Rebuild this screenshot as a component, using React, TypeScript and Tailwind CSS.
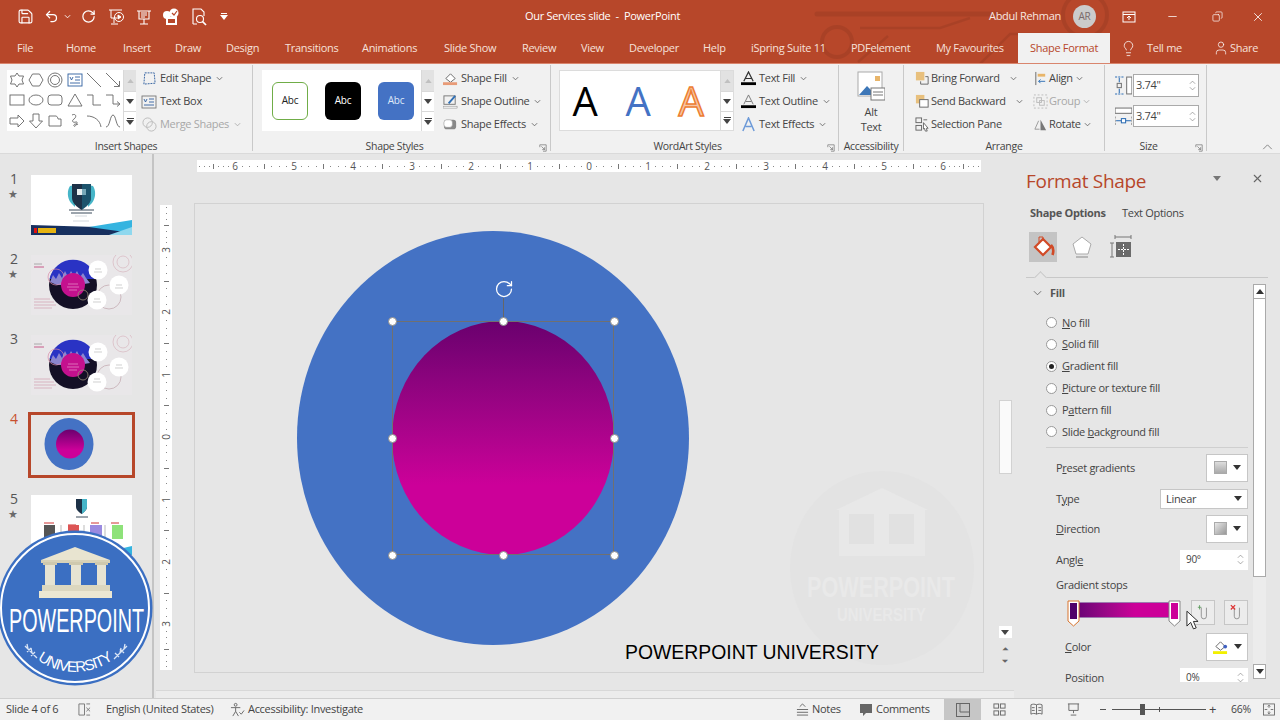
import React from "react";
import { Save, Undo2, RotateCw, Minus, X, Lightbulb, User, Copy } from "lucide-react";

const Chev = ({ c = "#666" }: { c?: string }) => (
  <svg viewBox="0 0 8 5" className="w-[7px] h-[5px] shrink-0" fill="none" stroke={c} strokeWidth="1"><path d="M1 1l3 3 3-3" /></svg>
);
const Tri = ({ c = "#333" }: { c?: string }) => (
  <svg viewBox="0 0 8 5" className="w-[8px] h-[5px] shrink-0"><path d="M0 0h8L4 5z" fill={c} /></svg>
);
const G = ({ children }: { children: React.ReactNode }) => (
  <svg viewBox="0 0 16 16" className="w-[16px] h-[16px]" fill="none" stroke="#666" strokeWidth="0.9">{children}</svg>
);

const shapes: React.ReactNode[] = [
  <polygon points="8,1 10,4 14.5,4 13,8 14.5,12 10,12 8,15 6,12 1.5,12 3,8 1.5,4 6,4" />,
  <polygon points="4.5,2 11.5,2 15,8 11.5,14 4.5,14 1,8" />,
  <><circle cx="8" cy="8" r="7" /><circle cx="8" cy="8" r="4.5" /></>,
  <><rect x="1" y="2" width="14" height="12" stroke="#2f5f9f" /><path d="M3 5l1.5 3L6 5M8 5h5M8 8h5M3 11h10" stroke="#2f5f9f" /></>,
  <path d="M1 1l14 14" />,
  <><path d="M1 1l13 13" /><path d="M14.5 9v5.500H9" /></>,
  <rect x="1" y="3" width="14" height="10" />,
  <ellipse cx="8" cy="8" rx="7" ry="5" />,
  <rect x="1" y="3" width="14" height="10" rx="3" />,
  <polygon points="8,2 15,14 1,14" />,
  <path d="M1 3h6v10h8" />,
  <><path d="M1 3h7v9h6" /><path d="M12 9.500l3 2.500-3 2.500" /></>,
  <polygon points="1,5 9,5 9,2 15,8 9,14 9,11 1,11" />,
  <polygon points="5,1 11,1 11,8 14.500,8 8,15 1.500,8 5,8" />,
  <path d="M2 3h7c1 0 2 2 2 3h3v7H2z" />,
  <path d="M5 2c4-2 5 2 2 4s-1 4 2 3-1 6-2 4 3-3 4-1" />,
  <path d="M1 3c7 0 13 4 14 11" />,
  <path d="M1 14C5 14 5 2 8 2s3 12 7 12" />,
];

const RB = ({ icon, label, chev = true, grey = false, gap = "gap-[3px]" }: { icon: React.ReactNode; label: string; chev?: boolean; grey?: boolean; gap?: string }) => (
  <div className={`h-[23px] flex items-center ${gap} text-[11px] whitespace-nowrap ${grey ? "text-[#a8a8a8]" : "text-[#444]"}`}>
    <span className="w-[16px] h-[16px] flex items-center justify-center shrink-0">{icon}</span>
    <span>{label}</span>
    {chev && <span className="ml-[2px]"><Chev c={grey ? "#aaa" : "#666"} /></span>}
  </div>
);

const Launcher = () => (
  <svg viewBox="0 0 10 10" className="absolute right-[3px] bottom-[-1px] w-[8px] h-[8px]" fill="none" stroke="#777" strokeWidth="0.9"><path d="M1 4V1h8v8H5M3 3l4 4M7 4v3H4" /></svg>
);

const Group = ({ w, label, children, launcher }: { w: string; label: string; children: React.ReactNode; launcher?: boolean }) => (
  <div className={`relative shrink-0 h-[86px] mt-[1px] border-r border-[#c9c9c9] flex flex-col ${w}`}>
    <div className="h-[74px] flex shrink-0">{children}</div>
    <div className={`h-[15px] shrink-0 text-center text-[10.5px] leading-[15px] text-[#444] whitespace-nowrap ${launcher ? "pr-[14px]" : ""}`}>{label}</div>
    {launcher && <Launcher />}
  </div>
);

const GalScroll = () => (
  <div className="w-[13px] shrink-0 flex flex-col border-l border-[#d9d9d9]">
    <div className="h-[21px] bg-[#e2e2e2] flex items-center justify-center"><svg viewBox="0 0 8 5" className="w-[7px] h-[4px]"><path d="M0 5h8L4 0z" fill="#c0c0c0" /></svg></div>
    <div className="h-[20px] bg-white flex items-center justify-center border-t border-[#d9d9d9]"><Tri c="#444" /></div>
    <div className="h-[20px] bg-white flex flex-col items-center justify-center gap-[1px] border-t border-[#d9d9d9]"><span className="w-[7px] h-[1px] bg-[#444]" /><Tri c="#444" /></div>
  </div>
);

const tabs: [string, string][] = [
  ["File", "w-[49px]"], ["Home", "w-[57px]"], ["Insert", "w-[52px]"], ["Draw", "w-[51px]"], ["Design", "w-[59px]"],
  ["Transitions", "w-[77px]"], ["Animations", "w-[82px]"], ["Slide Show", "w-[78px]"], ["Review", "w-[59px]"], ["View", "w-[48px]"],
  ["Developer", "w-[74px]"], ["Help", "w-[48px]"], ["iSpring Suite 11", "w-[100px]"], ["PDFelement", "w-[85px]"], ["My Favourites", "w-[82px]"],
];

const Qat = () => (
  <div className="flex items-center h-full ml-[17px] gap-0">
    <span className="w-[27px]"><Save size={17} color="#fff" strokeWidth={1.6} /></span>
    <span className="w-[16px]"><Undo2 size={15} color="#fff" strokeWidth={2} /></span>
    <span className="w-[21px] pl-[4px]"><Chev c="#fff" /></span>
    <span className="w-[27px]"><RotateCw size={15} color="#fff" strokeWidth={2} /></span>
    <span className="w-[27px]"><svg viewBox="0 0 18 18" className="w-[18px] h-[18px]" fill="none" stroke="#fff" strokeWidth="1"><path d="M1 2h13M3 2v8h6M6 10v5M3 16h7" /><circle cx="11" cy="9" r="4.500" /><path d="M10 7l3 2-3 2z" fill="#fff" /></svg></span>
    <span className="w-[27px]"><svg viewBox="0 0 18 18" className="w-[18px] h-[18px]" fill="none" stroke="#fff" strokeWidth="1.100"><path d="M2 3h14M4 3v8h10V3M9 11v5M5 16h8M6 5h6M6 7h6M6 9h4" /></svg></span>
    <span className="w-[28px]"><svg viewBox="0 0 18 18" className="w-[18px] h-[18px]"><rect x="4" y="9" width="11" height="8" fill="#fff" /><rect x="6" y="11" width="7" height="4" fill="#b7472a" /><circle cx="5" cy="7" r="4" fill="#fff" /><circle cx="12" cy="5" r="4.500" fill="#fff" /><path d="M10 5l2 2 3-4" stroke="#b7472a" fill="none" strokeWidth="1.200" /></svg></span>
    <span className="w-[30px]"><svg viewBox="0 0 18 18" className="w-[18px] h-[18px]" fill="none" stroke="#fff" strokeWidth="1.100"><path d="M3 16V1h8l3 3v4M3 16h4" /><circle cx="10" cy="11" r="3.500" /><path d="M12.500 13.500L16 17" strokeWidth="1.700" /></svg></span>
    <span className="flex flex-col items-center gap-[1px] w-[8px]"><span className="w-[6px] h-[1px] bg-white" /><Tri c="#fff" /></span>
  </div>
);

const Thumb12 = ({ alt = false }: { alt?: boolean }) => (
  <svg viewBox="0 0 101 60" className="w-[101px] h-[60px] block">
    <rect width="101" height="60" fill="#e9e7e9" />
    <circle cx="92" cy="7" r="10" fill="none" stroke="#d9bcc4" strokeWidth="0.8" />
    <circle cx="92" cy="7" r="6" fill="none" stroke="#d9bcc4" strokeWidth="0.8" />
    <circle cx="78" cy="42" r="12" fill="none" stroke="#cdb9bf" strokeWidth="1" />
    <circle cx="50" cy="45" r="6" fill="none" stroke="#bbb" strokeWidth="0.8" />
    <path d="M3 9h8" stroke="#9a9a9a" strokeWidth="0.8" /><path d="M3 12h10" stroke="#c85a8a" strokeWidth="1" />
    <path d="M3 44h16M3 47h20M3 50h22M3 53h18" stroke="#d8b3c0" strokeWidth="1" />
    <circle cx="42" cy="30" r="24" fill="#141026" />
    <path d="M18.500 24A24 24 0 0 1 65.500 24Z" fill="#2a33c4" />
    <path d="M19 27l3-7 3 4 3-6 3 5 3-7 3 6 3-6 3 5 3-5 3 6 3-4 3 5 4 5-12 2H26z" fill="#8c86cf" />
    <circle cx="25" cy="22" r="8" fill="none" stroke="#d98aa8" strokeWidth="0.7" />
    <circle cx="42" cy="30" r="12" fill="#c4118e" />
    <path d="M37 29h10M36 32h12M38 35h8" stroke="#f0b0d8" strokeWidth="0.6" />
    <circle cx="52" cy="40" r="5" fill="none" stroke="#9b8f78" strokeWidth="0.8" />
    <circle cx="67" cy={alt ? 17 : 15} r="9.500" fill="#fff" />
    <circle cx="88" cy={alt ? 32 : 30} r="9.500" fill="#fff" />
    <circle cx="66" cy={alt ? 47 : 45} r="9.500" fill="#fff" />
    <path d="M64 14h6M63 17h8M85 30h6M84 33h8M63 44h6M62 47h8" stroke="#bbb" strokeWidth="0.7" />
  </svg>
);

const Thumb1 = () => (
  <svg viewBox="0 0 101 60" className="w-[101px] h-[60px] block">
    <rect width="101" height="60" fill="#fff" />
    <path d="M39 11c-3 4-3 12 1 17l4 4V10zM62 11c3 4 3 12-1 17l-4 4V10z" fill="#46b5c8" />
    <path d="M41 9h19v14c0 5-5 9-9.500 12C46 32 41 28 41 23z" fill="#1d3147" />
    <path d="M46 14h9v6h-9z" fill="#e8eef0" /><path d="M51 9h9v14c0 5-5 9-9 12z" fill="#1c6f8a" opacity="0.55" />
    <path d="M38 35h25M40 38h21" stroke="#3a4a5a" strokeWidth="1" />
    <path d="M44 41h12M42 46h16" stroke="#c8ced4" strokeWidth="0.8" />
    <path d="M0 50l65 2 36-5v13H0z" fill="#17305f" />
    <path d="M58 52l43-7v13z" fill="#35b4e0" /><path d="M78 60l23-8v8z" fill="#8fd8ee" />
    <rect x="3" y="53" width="3" height="5" fill="#d11" /><rect x="7" y="53" width="18" height="5" fill="#e5b311" />
  </svg>
);

const Thumb4 = () => (
  <svg viewBox="0 0 101 60" className="w-[101px] h-[60px] block">
    <defs><linearGradient id="t4" x1="0" x2="0" y1="0" y2="1"><stop offset="0" stopColor="#6a006e" /><stop offset="0.7" stopColor="#cc0099" /></linearGradient></defs>
    <rect width="101" height="60" fill="#e6e6e6" />
    <ellipse cx="38" cy="29" rx="24.500" ry="26" fill="#4472c4" />
    <ellipse cx="39" cy="29" rx="14" ry="14.500" fill="url(#t4)" />
  </svg>
);

const Thumb5 = () => (
  <svg viewBox="0 0 101 60" className="w-[101px] h-[60px] block">
    <rect width="101" height="60" fill="#fff" />
    <path d="M45 4h11v8c0 3-3 5-5.500 7C48 17 45 15 45 12z" fill="#1d3147" /><path d="M51 4h5v8c0 3-3 5-5 7z" fill="#45b4c8" />
    <path d="M45 22h12" stroke="#3a4a5a" />
    <path d="M13 28h10M37 30h8M60 28h8M80 28h8" stroke="#c33" strokeWidth="1" />
    <rect x="13" y="30" width="11" height="13" fill="#555" /><rect x="37" y="30" width="11" height="10" fill="#d55" />
    <rect x="59" y="30" width="12" height="13" fill="#9a8ae0" /><rect x="81" y="30" width="11" height="14" fill="#8ee27a" />
    <path d="M30 30v12M53 30v12M74 30v12" stroke="#bbb" /><path d="M88 54l13-3v9H88z" fill="#35b4e0" />
  </svg>
);

const Star = () => <span className="text-[11px] leading-[12px] text-[#6a6a6a]">★</span>;

const slides = [
  { n: "1", star: true, el: <Thumb1 /> },
  { n: "2", star: true, el: <Thumb12 /> },
  { n: "3", star: false, el: <Thumb12 alt /> },
  { n: "4", star: false, el: <Thumb4 />, active: true },
  { n: "5", star: true, el: <Thumb5 /> },
];

const HDots = () => (
  <div className="flex-1 flex items-center justify-around">
    {[0, 1, 2, 3, 4, 5, 6].map((i) => i === 3 ? <span key={i} className="w-[1px] h-[5px] bg-[#777]" /> : <span key={i} className="w-[1px] h-[1px] bg-[#888]" />)}
  </div>
);
const VDots = () => (
  <div className="flex-1 flex flex-col items-center justify-around">
    {[0, 1, 2, 3, 4, 5, 6].map((i) => i === 3 ? <span key={i} className="h-[1px] w-[5px] bg-[#777]" /> : <span key={i} className="w-[1px] h-[1px] bg-[#888]" />)}
  </div>
);

const hNums = ["6", "5", "4", "3", "2", "1", "0", "1", "2", "3", "4", "5", "6"];
const vNums = ["3", "2", "1", "0", "1", "2", "3"];

const HRuler = () => (
  <div className="ml-[43px] mt-[6px] w-[784px] h-[12px] bg-white flex items-center text-[10px] leading-[12px] text-[#555]">
    <div className="w-[34px] flex items-center h-full"><HDots /></div>
    {hNums.map((n, i) => (
      <React.Fragment key={i}>
        <span className="w-[8px] text-center">{n}</span>
        {i < 12 ? <div className="w-[51px] flex items-center h-full"><HDots /></div> : <div className="flex-1 flex items-center h-full"><HDots /></div>}
      </React.Fragment>
    ))}
  </div>
);

const VRuler = () => (
  <div className="ml-[6px] w-[12px] h-[465px] bg-white flex flex-col items-center text-[10px] leading-[8px] text-[#555] shrink-0">
    <div className="h-[41px] w-full flex flex-col"><VDots /></div>
    {vNums.map((n, i) => (
      <React.Fragment key={i}>
        <span className="h-[8px] flex items-center justify-center -rotate-90">{n}</span>
        {i < 6 ? <div className="h-[54.400px] w-full flex flex-col"><VDots /></div> : <div className="flex-1 w-full flex flex-col"><VDots /></div>}
      </React.Fragment>
    ))}
  </div>
);

const Handle = ({ cls }: { cls: string }) => <span className={`absolute w-[9px] h-[9px] rounded-full bg-white border border-[#8a8a8a] ${cls}`} />;

const Box = ({ w = "w-[42px]", h = "h-[28px]", children }: { w?: string; h?: string; children: React.ReactNode }) => (
  <div className={`${w} ${h} bg-white border border-[#c6c6c6] flex items-center justify-center gap-[6px] shrink-0`}>{children}</div>
);
const Swatch = ({ angled = false }: { angled?: boolean }) => (
  <span className={`w-[13px] h-[13px] border border-[#aaa] ${angled ? "bg-gradient-to-br from-[#e8e8e8] to-[#999]" : "bg-gradient-to-b from-[#ddd] to-[#aaa]"}`} />
);
const Spin = () => (
  <svg viewBox="0 0 8 12" className="w-[7px] h-[11px]" fill="none" stroke="#888" strokeWidth="0.8"><path d="M1 4l3-3 3 3M1 8l3 3 3-3" /></svg>
);

const radios = [
  ["N", "o fill", ""], ["S", "olid fill", ""], ["G", "radient fill", "on"], ["P", "icture or texture fill", ""],
];

const Radio = ({ on }: { on?: boolean }) => (
  <span className="w-[11px] h-[11px] rounded-full bg-white border border-[#999] flex items-center justify-center shrink-0">
    {on && <span className="w-[5px] h-[5px] rounded-full bg-[#222]" />}
  </span>
);

export default function App() {
  return (
    <div className="relative w-[1280px] h-[720px] overflow-hidden flex flex-col bg-[#e6e6e6] [font-family:'Open_Sans',sans-serif] tracking-[-0.3px] text-[#444]">
      <div className="relative bg-[#b7472a] shrink-0">
        <svg viewBox="0 0 320 64" className="absolute left-[800px] top-0 w-[320px] h-[64px] opacity-[0.07]" fill="none" stroke="#000" strokeWidth="4">
          <path d="M17 14h183" strokeWidth="5" strokeLinecap="round" />
          <circle cx="37" cy="42" r="15" />
          <circle cx="285" cy="15" r="22" />
          <path d="M60 28h80l30-10M58 62l30-26M180 64l30-30h70" strokeWidth="2.500" />
        </svg>
        {/* title bar */}
        <div className="relative h-[33px] flex items-center text-white">
          <div className="w-[525px] h-full shrink-0"><Qat /></div>
          <div className="w-[464px] shrink-0 text-[11px] whitespace-pre">Our Services slide  -  PowerPoint</div>
          <div className="w-[84px] shrink-0 text-[11px] text-[#f8e7e0]">Abdul Rehman</div>
          <div className="w-[23px] h-[23px] rounded-full bg-[#cbcbcb] text-[#7a6a6a] text-[10px] flex items-center justify-center shrink-0">AR</div>
          <div className="ml-[26px] w-[44px] shrink-0">
            <svg viewBox="0 0 14 12" className="w-[14px] h-[12px]" fill="none" stroke="#fff" strokeWidth="1"><rect x="1" y="1" width="12" height="10" /><path d="M1 3.500h12M7 9V5M5 7l2-2 2 2" /></svg>
          </div>
          <div className="w-[46px] shrink-0"><Minus size={13} color="#fff" strokeWidth={1.4} /></div>
          <div className="w-[39px] shrink-0"><Copy size={11} color="#fff" strokeWidth={1.5} className="-scale-x-100" /></div>
          <X size={14} color="#fff" strokeWidth={1.4} />
        </div>
        {/* tabs */}
        <div className="relative h-[30px] flex items-center pl-[17px] text-[11px] text-[#f6e1da]">
          {tabs.map(([t, w]) => <div key={t} className={`${w} shrink-0 whitespace-nowrap`}>{t}</div>)}
          <div className="w-[92px] h-full bg-[#f1f1f1] text-[#b7472a] flex items-center justify-center shrink-0">Shape Format</div>
          <div className="ml-[10px] w-[27px] shrink-0"><Lightbulb size={17} color="#fff" strokeWidth={1.1} /></div>
          <div className="w-[66px] shrink-0">Tell me</div>
          <div className="w-[17px] shrink-0"><User size={16} color="#fff" strokeWidth={1.1} /></div>
          <div>Share</div>
        </div>
      </div>
      {/* ribbon */}
      <div className="h-[91px] bg-[#f1f1f1] border-t border-[#d9856d] border-b-[#dadada] border-b flex shrink-0 relative">
        <Group w="w-[253px]" label="Insert Shapes">
          <div className="ml-[7px] mt-[5px] w-[129px] h-[61px] bg-white flex shrink-0">
            <div className="flex-1 grid grid-cols-6 grid-rows-3 place-items-center">{shapes.map((s, i) => <G key={i}>{s}</G>)}</div>
            <GalScroll />
          </div>
          <div className="ml-[5px] mt-[2px] flex flex-col">
            <RB label="Edit Shape" icon={<svg viewBox="0 0 16 16" className="w-[15px] h-[15px]" fill="none" stroke="#2f5f9f" strokeWidth="1" strokeDasharray="2 1"><path d="M3 2h10l1 11-12 1z" /></svg>} />
            <RB label="Text Box" chev={false} icon={<G><rect x="1" y="2" width="14" height="12" stroke="#777" /><path d="M3 5l1.500 3L6 5M8 5h5M8 8h5M3 11h10" stroke="#2f5f9f" /></G>} />
            <RB label="Merge Shapes" grey icon={<svg viewBox="0 0 16 16" className="w-[15px] h-[15px]" fill="none" stroke="#bbb"><circle cx="6" cy="6" r="5" /><circle cx="10" cy="10" r="5" /></svg>} />
          </div>
        </Group>
        <Group w="w-[298px]" label="Shape Styles" launcher>
          <div className="ml-[9px] mt-[5px] w-[172px] h-[61px] bg-white flex shrink-0">
            <div className="flex-1 flex items-center pl-[10px] gap-[17px] text-[10px]">
              <div className="w-[36px] h-[38px] rounded-[6px] bg-white border border-[#70ad47] flex items-center justify-center text-[#222]">Abc</div>
              <div className="w-[36px] h-[38px] rounded-[6px] bg-black flex items-center justify-center text-white">Abc</div>
              <div className="w-[36px] h-[38px] rounded-[6px] bg-[#4472c4] flex items-center justify-center text-[#dfe8f8]">Abc</div>
            </div>
            <GalScroll />
          </div>
          <div className="ml-[8px] mt-[2px] flex flex-col">
            <RB label="Shape Fill" icon={<svg viewBox="0 0 16 16" className="w-[15px] h-[15px]"><path d="M3 8l5-5 5 5-5 4z" fill="#fff" stroke="#666" /><rect x="0" y="12" width="15" height="3" fill="#e89b77" /></svg>} />
            <RB label="Shape Outline" icon={<svg viewBox="0 0 16 16" className="w-[15px] h-[15px]" fill="none"><rect x="1" y="2" width="12" height="9" stroke="#777" /><path d="M6 10l7-8" stroke="#2f6fb5" strokeWidth="2" /><rect x="0" y="13" width="15" height="2" fill="#fff" stroke="#777" strokeWidth="0.500" /></svg>} />
            <RB label="Shape Effects" icon={<svg viewBox="0 0 16 16" className="w-[15px] h-[15px]"><rect x="1" y="3" width="13" height="10" rx="3" fill="#888" /><rect x="1" y="3" width="9" height="8" rx="3" fill="#fff" stroke="#999" strokeWidth="0.600" /></svg>} />
          </div>
        </Group>
        <Group w="w-[288px]" label="WordArt Styles" launcher>
          <div className="ml-[8px] mt-[5px] w-[175px] h-[61px] bg-white border border-[#dcdcdc] flex shrink-0">
            <div className="flex-1 flex items-center pl-[12px] gap-[27px] text-[40px] leading-[40px] font-medium">
              <span className="w-[26px] text-center text-black">A</span>
              <span className="w-[26px] text-center text-[#4472c4]">A</span>
              <span className="w-[26px] text-center text-[#f6c6a5] [-webkit-text-stroke:1.500px_#ed7d31]">A</span>
            </div>
            <GalScroll />
          </div>
          <div className="ml-[6px] mt-[2px] flex flex-col">
            <RB label="Text Fill" icon={<svg viewBox="0 0 16 16" className="w-[15px] h-[15px]"><path d="M3 11L8 1l5 10M5 8h6" fill="none" stroke="#333" strokeWidth="1.300" /><rect y="12" width="16" height="3" fill="#000" /></svg>} />
            <RB label="Text Outline" icon={<svg viewBox="0 0 16 16" className="w-[15px] h-[15px]"><path d="M3 11L8 1l5 10M5 8h6" fill="none" stroke="#777" /><rect y="12" width="16" height="3" fill="#000" /></svg>} />
            <RB label="Text Effects" icon={<svg viewBox="0 0 16 16" className="w-[15px] h-[15px]"><path d="M2 15L8 1l6 14M5 10h6" fill="none" stroke="#6d9ad8" strokeWidth="1.600" /></svg>} />
          </div>
        </Group>
        <Group w="w-[65px]" label="Accessibility">
          <div className="w-full flex flex-col items-center pt-[6px] text-[11px] leading-[15px]">
            <svg viewBox="0 0 28 30" className="w-[28px] h-[30px] mb-[3px]"><rect x="1" y="1" width="24" height="24" fill="#fff" stroke="#aaa" /><rect x="18" y="5" width="5" height="5" fill="#e8b56a" /><path d="M2 24l8-9 5 5 4-3 6 7z" fill="#3d77b8" /><rect x="14" y="17" width="14" height="12" fill="#fff" stroke="#777" /><path d="M16 21h10M16 24h10" stroke="#777" /></svg>
            <span>Alt</span><span>Text</span>
          </div>
        </Group>
        <Group w="w-[201px]" label="Arrange">
          <div className="ml-[10px] mt-[2px] w-[118px] flex flex-col shrink-0">
            <div className="flex items-center justify-between pr-[15px]"><RB gap="gap-[1px]" chev={false} label="Bring Forward" icon={<svg viewBox="0 0 16 16" className="w-[15px] h-[15px]"><rect x="1" y="1" width="9" height="9" fill="#e8c07d" /><path d="M11 6h3v8H6v-3" fill="none" stroke="#666" /></svg>} /><Chev /></div>
            <div className="flex items-center justify-between pr-[9px]"><RB gap="gap-[1px]" chev={false} label="Send Backward" icon={<svg viewBox="0 0 16 16" className="w-[15px] h-[15px]"><rect x="1" y="1" width="9" height="9" fill="#e8c07d" /><rect x="5" y="6" width="9" height="8" fill="#fff" stroke="#666" /></svg>} /><Chev /></div>
            <RB gap="gap-[1px]" chev={false} label="Selection Pane" icon={<svg viewBox="0 0 16 16" className="w-[15px] h-[15px]" fill="none" stroke="#666"><rect x="1" y="1" width="6" height="5" /><rect x="1" y="9" width="6" height="5" /><path d="M9 3h4M9 6l5 6-2 0 1 3-2 0-1-3-1 1z" fill="#fff" /></svg>} />
          </div>
          <div className="mt-[2px] flex flex-col">
            <RB gap="gap-[1px]" label="Align" icon={<svg viewBox="0 0 16 16" className="w-[15px] h-[15px]"><path d="M3 1v14" stroke="#666" /><rect x="5" y="3" width="8" height="3" fill="#e8b56a" /><path d="M13 11H6M8 9l-2 2 2 2" stroke="#2f6fb5" fill="none" /></svg>} />
            <RB gap="gap-[1px]" grey label="Group" icon={<svg viewBox="0 0 16 16" className="w-[15px] h-[15px]" fill="none" stroke="#bbb"><rect x="1" y="1" width="14" height="14" strokeDasharray="2 2" /><rect x="4" y="4" width="5" height="5" /><rect x="7" y="7" width="5" height="5" /></svg>} />
            <RB gap="gap-[1px]" label="Rotate" icon={<svg viewBox="0 0 16 16" className="w-[15px] h-[15px]"><path d="M8 3l6 11H8z" fill="#777" /><path d="M6 4L2 13h5" fill="none" stroke="#999" /></svg>} />
          </div>
        </Group>
        <Group w="w-[102px]" label="Size" launcher>
          <div className="ml-[10px] mt-[9px] flex flex-col gap-[8px]">
            <div className="flex items-center gap-[1px]">
              <svg viewBox="0 0 16 18" className="w-[17px] h-[19px]"><path d="M0 1h9M0 17h9" stroke="#2f6fb5" strokeDasharray="2 1" /><path d="M4 2v4M4 12v4" stroke="#2f6fb5" /><rect x="2" y="7" width="4" height="4" fill="none" stroke="#777" /><rect x="11" y="1" width="5" height="16" fill="#fff" stroke="#777" /></svg>
              <div className="w-[66px] h-[23px] bg-white border border-[#aaa] flex items-center justify-between pl-[2px] pr-[2px] text-[11px]">3.74"<Spin /></div>
            </div>
            <div className="flex items-center gap-[1px]">
              <svg viewBox="0 0 16 18" className="w-[17px] h-[19px]"><rect x="0" y="1" width="16" height="5" fill="#fff" stroke="#777" /><path d="M0 9v8M16 9v8" stroke="#777" strokeDasharray="2 1" /><path d="M1 13h14" stroke="#2f6fb5" /><rect x="6" y="11" width="4" height="4" fill="#fff" stroke="#2f6fb5" /></svg>
              <div className="w-[66px] h-[22px] bg-white border border-[#aaa] flex items-center justify-between pl-[2px] pr-[2px] text-[11px]">3.74"<Spin /></div>
            </div>
          </div>
        </Group>
        <svg viewBox="0 0 12 7" className="absolute left-[1262px] top-[80px] w-[11px] h-[6px]" fill="none" stroke="#777"><path d="M1 6l5-5 5 5" /></svg>
      </div>
      {/* main */}
      <div className="flex-1 flex min-h-0">
        <div className="w-[154px] shrink-0 border-r-2 border-[#c4c4c4] pt-[21px] overflow-hidden h-[544px]">
          {slides.map((s) => (
            <div key={s.n} className="h-[80px] flex pl-[8px]">
              <div className="w-[23px] -mt-[5px] flex flex-col items-start">
                <span className={`text-[14px] leading-[18px] pl-[2px] ${s.active ? "text-[#c8502f]" : "text-[#555]"}`}>{s.n}</span>
                {s.star && <Star />}
              </div>
              <div className={`w-[101px] h-[60px] ${s.active ? "ring-[3px] ring-[#b7472a]" : ""}`}>{s.el}</div>
            </div>
          ))}
        </div>
        {/* editor */}
        <div className="w-[860px] shrink-0 flex flex-col h-[544px]">
          <HRuler />
          <div className="flex mt-[33px]">
            <VRuler />
            <div className="relative ml-[22px] -mt-[2px] w-[790px] h-[470px] border border-[#d2d2d2] bg-[#e6e6e6] shrink-0">
              <svg viewBox="0 0 186 196" className="absolute left-[594px] top-[266px] w-[186px] h-[196px]">
                <ellipse cx="93" cy="98" rx="92" ry="97" fill="#e3e3e3" />
                <path d="M93 18l46 22H47z" fill="#e8e8e8" />
                <rect x="50" y="40" width="86" height="46" fill="#e8e8e8" />
                <rect x="60" y="44" width="25" height="30" fill="#e1e1e1" /><rect x="100" y="44" width="25" height="30" fill="#e1e1e1" />
                <text x="18" y="127" textLength="148" lengthAdjust="spacingAndGlyphs" fontSize="30" fill="#e9e9e9" fontWeight="700" letterSpacing="0" fontFamily="'Liberation Sans',sans-serif">POWERPOINT</text>
                <text x="48" y="151" textLength="89" lengthAdjust="spacingAndGlyphs" fontSize="19" fill="#e9e9e9" fontWeight="700" letterSpacing="0" fontFamily="'Liberation Sans',sans-serif">UNIVERSITY</text>
              </svg>
              <div className="absolute left-[102px] top-[27px] w-[392px] h-[414px] rounded-[50%] bg-[#4472c4]" />
              <div className="absolute left-[197px] top-[117px] w-[222px] h-[234px] rounded-[50%] bg-gradient-to-b from-[#6a006e] to-[#cc0099] to-70%" />
              <div className="absolute left-[197px] top-[117px] w-[222px] h-[234px] border border-[#707070]" />
              <div className="absolute left-[308px] top-[94px] w-[1px] h-[24px] bg-[#666]" />
              <RotateCw size={20} color="#fff" strokeWidth={1.5} className="absolute left-[299px] top-[75px]" />
              <Handle cls="left-[193px] top-[113px]" /><Handle cls="left-[304px] top-[113px]" /><Handle cls="left-[415px] top-[113px]" />
              <Handle cls="left-[193px] top-[230px]" /><Handle cls="left-[415px] top-[230px]" />
              <Handle cls="left-[193px] top-[347px]" /><Handle cls="left-[304px] top-[347px]" /><Handle cls="left-[415px] top-[347px]" />
              <div className="absolute left-[430px] top-[437px] text-[19.400px] leading-[22px] tracking-normal text-black whitespace-nowrap [font-family:'Liberation_Sans',sans-serif]">POWERPOINT UNIVERSITY</div>
            </div>
            <div className="absolute left-[998px] top-[154px] w-[14px] h-[544px] flex flex-col items-center">
              <div className="h-[246px]" />
              <div className="w-[13px] h-[74px] bg-[#fafafa] border border-[#d2d2d2]" />
              <div className="h-[152px]" />
              <div className="w-[13px] h-[12px] flex items-center justify-center bg-white"><Tri c="#444" /></div>
              <div className="mt-[6px] text-[8px] leading-[8px] text-[#666]">⏶</div>
              <div className="mt-[5px] text-[8px] leading-[8px] text-[#666]">⏷</div>
            </div>
          </div>
          <div className="absolute left-[156px] top-[690px] w-[858px] h-[8px] bg-[#ececec] border-t border-[#d8d8d8]" />
        </div>
        {/* pane */}
        <div className="w-[266px] shrink-0 bg-[#e6e6e6] h-[544px] flex flex-col">
          <div className="h-[49px] pt-[5px] pl-[12px] pr-[16px] flex items-center shrink-0">
            <span className="text-[19px] text-[#b7472a] flex-1">Format Shape</span>
            <span className="mr-[30px] -mt-[6px]"><Tri c="#777" /></span>
            <span className="-mt-[6px]"><X size={13} color="#666" strokeWidth={2} /></span>
          </div>
          <div className="h-[20px] pl-[16px] flex items-center text-[11px] shrink-0">
            <span className="w-[92px] font-bold text-[#555]">Shape Options</span><span>Text Options</span>
          </div>
          <div className="mt-[9px] h-[30px] pl-[15px] flex items-center shrink-0">
            <div className="w-[28px] h-[30px] bg-[#c4c4c4] flex items-center justify-center">
              <svg viewBox="0 0 24 24" className="w-[24px] h-[24px]"><path d="M12 4l8 8-8 8-8-8z" fill="#fff" stroke="#d14a27" strokeWidth="2.200" /><path d="M8 7V2h4v4" fill="none" stroke="#d14a27" /><path d="M20 10c3 3 2.500 7 1.500 10" stroke="#d14a27" strokeWidth="2.600" fill="none" /></svg>
            </div>
            <div className="ml-[11px] w-[28px] flex justify-center">
              <svg viewBox="0 0 24 24" className="w-[24px] h-[24px]"><path d="M12 2l9 7-3 10H6L3 9z" fill="#fff" stroke="#aaa" /><path d="M6 22h12" stroke="#888" /></svg>
            </div>
            <div className="ml-[11px] w-[28px] flex justify-center">
              <svg viewBox="0 0 24 24" className="w-[24px] h-[24px]"><path d="M6 2h16M3 8v14M1 8h4M1 22h4M6 0v4M22 0v4" stroke="#777" fill="none" /><rect x="7" y="7" width="15" height="15" fill="#6b6b6b" /><path d="M14.500 9v11M9 14.500h11" stroke="#fff" strokeDasharray="2 1" /></svg>
            </div>
          </div>
          <div className="relative mt-[15px] mx-[12px] h-[1px] bg-[#c8c8c8] shrink-0">
            <span className="absolute left-[10px] -top-[4px] w-[9px] h-[9px] rotate-45 bg-[#e6e6e6] border-l border-t border-[#c8c8c8]" />
          </div>
          <div className="h-[404px] flex overflow-hidden shrink-0">
            <div className="w-[239px] shrink-0 pl-[18px]">
              <div className="mt-[5px] h-[20px] flex items-center gap-[8px] text-[11px] font-bold text-[#555]">
                <svg viewBox="0 0 10 6" className="w-[9px] h-[6px] ml-[1px]" fill="none" stroke="#666"><path d="M1 1l4 4 4-4" /></svg>
                Fill
              </div>
              <div className="mt-[9px] pl-[14px] text-[11px]">
                {radios.map(([u, rest, on]) => (
                  <div key={u} className="h-[21.800px] flex items-center gap-[5px]"><Radio on={!!on} /><span><span className="underline">{u}</span>{rest}</span></div>
                ))}
                <div className="h-[21.800px] flex items-center gap-[5px]"><Radio /><span>P<span className="underline">a</span>ttern fill</span></div>
                <div className="h-[21.800px] flex items-center gap-[5px]"><Radio /><span>Slide <span className="underline">b</span>ackground fill</span></div>
              </div>
              <div className="mt-[4px] ml-[14px] w-[202px] h-[1px] bg-[#cfcfcf]" />
              <div className="ml-[24px] w-[192px] text-[11px]">
                <div className="mt-[6px] flex items-center justify-between h-[28px]"><span>P<span className="underline">r</span>eset gradients</span><Box><Swatch /><Tri /></Box></div>
                <div className="mt-[7px] flex items-center justify-between h-[20px]"><span>T<span className="underline">y</span>pe</span>
                  <div className="w-[88px] h-[20px] bg-white border border-[#c6c6c6] flex items-center justify-between px-[5px]"><span>Linear</span><Tri /></div>
                </div>
                <div className="mt-[6px] flex items-center justify-between h-[28px]"><span><span className="underline">D</span>irection</span><Box><Swatch angled /><Tri /></Box></div>
                <div className="mt-[7px] flex items-center justify-between h-[20px]"><span>Angl<span className="underline">e</span></span>
                  <div className="w-[68px] h-[20px] bg-white flex items-center justify-between pl-[6px] pr-[4px] text-[10px]"><span>90°</span><Spin /></div>
                </div>
                <div className="mt-[7px] h-[16px] flex items-center">Gradient stops</div>
                <div className="mt-[7px] h-[25px] flex items-center">
                  <div className="relative ml-[12px] mb-[4px] w-[112px] h-[16px] bg-gradient-to-r from-[#5d0070] via-[#cc0099] via-[60%] to-[#cc0099] border border-[#9d7bb0]">
                    <svg viewBox="0 0 13 27" className="absolute -left-[2px] -top-[3px] w-[13px] h-[27px]"><path d="M1 1h11v20l-5.500 5L1 21z" fill="#fff" stroke="#d8752f" /><rect x="3" y="3" width="7" height="16" fill="#50006a" /></svg>
                    <svg viewBox="0 0 13 27" className="absolute right-[-2px] -top-[3px] w-[13px] h-[27px]"><path d="M1 1h11v20l-5.500 5L1 21z" fill="#fff" stroke="#888" /><rect x="3" y="3" width="7" height="16" fill="#cc0099" /></svg>
                  </div>
                  <div className="ml-[11px] w-[24px] h-[25px] bg-[#ececec] border border-[#c6c6c6] flex items-center justify-center">
                    <svg viewBox="0 0 14 18" className="w-[12px] h-[16px]" fill="none" stroke="#888"><path d="M5 4v10a3 3 0 0 0 6 0V4" /><path d="M3 1v5M1 3.500h4" stroke="#5a9a5a" /></svg>
                  </div>
                  <div className="ml-[9px] w-[24px] h-[25px] bg-[#ececec] border border-[#c6c6c6] flex items-center justify-center">
                    <svg viewBox="0 0 14 18" className="w-[12px] h-[16px]" fill="none" stroke="#888"><path d="M5 4v10a3 3 0 0 0 6 0V4" /><path d="M1 1l5 5M6 1L1 6" stroke="#d33" strokeWidth="1.500" /></svg>
                  </div>
                </div>
                <div className="mt-[8px] h-[28px] flex items-center justify-between pl-[9px]"><span><span className="underline">C</span>olor</span>
                  <Box><svg viewBox="0 0 16 16" className="w-[15px] h-[15px]"><path d="M3 8l5-5 5 5-5 4z" fill="#fff" stroke="#666" /><circle cx="13" cy="8" r="2" fill="#4060c0" /><rect x="0" y="13" width="15" height="3" fill="#f2f000" /></svg><Tri /></Box>
                </div>
                <div className="mt-[7px] h-[20px] flex items-center justify-between pl-[9px]"><span>Position</span>
                  <div className="w-[68px] h-[20px] bg-white flex items-center justify-between pl-[6px] pr-[4px] text-[10px]"><span>0%</span><Spin /></div>
                </div>
              </div>
            </div>
            <div className="w-[13px] mt-[6px] h-[395px] flex flex-col shrink-0">
              <div className="h-[15px] bg-white border border-[#aaa] flex items-center justify-center"><svg viewBox="0 0 8 5" className="w-[8px] h-[5px]"><path d="M0 5h8L4 0z" fill="#333" /></svg></div>
              <div className="h-[278px] bg-white border-x border-b border-[#aaa]" />
              <div className="flex-1 bg-[#ececec]" />
              <div className="h-[15px] bg-white border border-[#aaa] flex items-center justify-center"><Tri /></div>
            </div>
          </div>
        </div>
      </div>
      {/* status bar */}
      <div className="h-[22px] bg-[#f1f1f1] border-t border-[#cfcfcf] flex items-center text-[11px] text-[#444] shrink-0">
        <span className="ml-[6px] w-[72px]">Slide 4 of 6</span>
        <svg viewBox="0 0 14 14" className="w-[13px] h-[13px] shrink-0" fill="none" stroke="#777"><path d="M1 1h6v12H1zM9 1h4M9 13h4M9 5l4 4M13 5l-4 4" /></svg>
        <span className="ml-[15px] w-[124px] whitespace-nowrap">English (United States)</span>
        <svg viewBox="0 0 16 16" className="w-[15px] h-[15px] shrink-0" fill="none" stroke="#666"><circle cx="6" cy="3" r="1.500" /><path d="M1 6h10M6 6v4l-3 5M6 10l3 5" /><path d="M10 11l2 2 3-4" /></svg>
        <span className="ml-[3px] w-[548px] whitespace-nowrap">Accessibility: Investigate</span>
        <svg viewBox="0 0 14 14" className="w-[13px] h-[13px] shrink-0" fill="none" stroke="#666"><path d="M4 4l3-3 3 3M1 7h12M1 10h12M1 13h12" /></svg>
        <span className="ml-[3px] w-[47px]">Notes</span>
        <svg viewBox="0 0 14 14" className="w-[14px] h-[14px] shrink-0"><path d="M1 1h12v9H7l-3 3v-3H1z" fill="#666" /></svg>
        <span className="ml-[3px] w-[68px] whitespace-nowrap">Comments</span>
        <div className="w-[37px] h-full bg-[#c6c6c6] flex items-center justify-center shrink-0">
          <svg viewBox="0 0 14 14" className="w-[14px] h-[14px]" fill="none" stroke="#666"><rect x="0.500" y="0.500" width="13" height="13" /><path d="M4 1v8h10" /></svg>
        </div>
        <svg viewBox="0 0 14 14" className="ml-[12px] w-[13px] h-[13px] shrink-0" fill="none" stroke="#666"><rect x="1" y="1" width="5" height="4.500" /><rect x="8" y="1" width="5" height="4.500" /><rect x="1" y="8.500" width="5" height="4.500" /><rect x="8" y="8.500" width="5" height="4.500" /></svg>
        <svg viewBox="0 0 14 14" className="ml-[24px] w-[13px] h-[13px] shrink-0" fill="none" stroke="#666"><path d="M1 2c2-1 4-1 6 0 2-1 4-1 6 0v10c-2-1-4-1-6 0-2-1-4-1-6 0zM7 2v10M2 5h3M2 8h3M9 5h3M9 8h3" /></svg>
        <svg viewBox="0 0 14 14" className="ml-[24px] w-[13px] h-[13px] shrink-0" fill="none" stroke="#666"><path d="M1 1h12M2 1v7h10V1M7 8v3M4 13h6" /></svg>
        <span className="ml-[20px] w-[6px] h-[1px] bg-[#555] shrink-0" />
        <div className="relative ml-[6px] w-[94px] h-[1px] bg-[#555] shrink-0">
          <span className="absolute left-[28px] -top-[5px] w-[5px] h-[11px] bg-[#555]" />
          <span className="absolute left-[47px] -top-[2px] w-[1px] h-[5px] bg-[#555]" />
        </div>
        <span className="ml-[3px] text-[13px] leading-[13px] w-[22px]">+</span>
        <span className="w-[32px] text-[10.500px]">66%</span>
        <svg viewBox="0 0 14 14" className="w-[12px] h-[13px] shrink-0" fill="none" stroke="#666"><rect x="0.500" y="0.500" width="13" height="13" /><path d="M7 2v3M5.500 3.500L7 2l1.500 1.500M7 12V9M5.500 10.500L7 12l1.500-1.500M2 7h3M9 7h3" /></svg>
      </div>
      {/* cursor */}
      <svg viewBox="0 0 14 22" className="absolute left-[1186px] top-[610px] w-[13px] h-[21px]"><path d="M1 1v16l4-4 3 7 3-1-3-7h5z" fill="#fff" stroke="#222" /></svg>
      {/* logo */}
      <svg viewBox="0 0 156 156" className="absolute left-[-3px] top-[530px] w-[156px] h-[156px]">
        <defs><path id="arc" d="M37 127 A 64 64 0 0 0 119 127" /></defs>
        <circle cx="78" cy="78" r="77.500" fill="#3b6fc2" />
        <circle cx="78" cy="78" r="74" fill="none" stroke="#fff" strokeWidth="2" />
        <path d="M78 17l35 13H44z" fill="#e8e4d0" />
        <rect x="44" y="30" width="69" height="3" fill="#d8d2b8" />
        <rect x="48" y="34" width="10" height="22" fill="#e6e3d2" /><rect x="74" y="34" width="10" height="22" fill="#e6e3d2" /><rect x="100" y="34" width="9" height="22" fill="#e6e3d2" />
        <rect x="46" y="32" width="14" height="3" fill="#cfc9ae" /><rect x="72" y="32" width="14" height="3" fill="#cfc9ae" /><rect x="98" y="32" width="13" height="3" fill="#cfc9ae" />
        <rect x="45" y="55" width="68" height="6" fill="#dcd7bf" /><rect x="42" y="61" width="73" height="7" fill="#ebe7d2" />
        <text x="12" y="102" textLength="135" lengthAdjust="spacingAndGlyphs" fill="#fff" fontSize="33" letterSpacing="0" fontFamily="'Liberation Sans',sans-serif">POWERPOINT</text>
        <text fill="#fff" fontSize="15" letterSpacing="-1" fontFamily="'Liberation Sans',sans-serif"><textPath href="#arc" startOffset="50%" textAnchor="middle">UNIVERSITY</textPath></text>
        <path d="M28 116l12 12M30 122l4-4M34 126l4-4M30 114l1 5M34 118l1 5M130 116l-13 13M127 123l-4-4M122 127l-4-4M128 114l-1 5M124 118l-1 5" stroke="#d8e4f5" strokeWidth="1.300" fill="none" />
      </svg>
    </div>
  );
}
